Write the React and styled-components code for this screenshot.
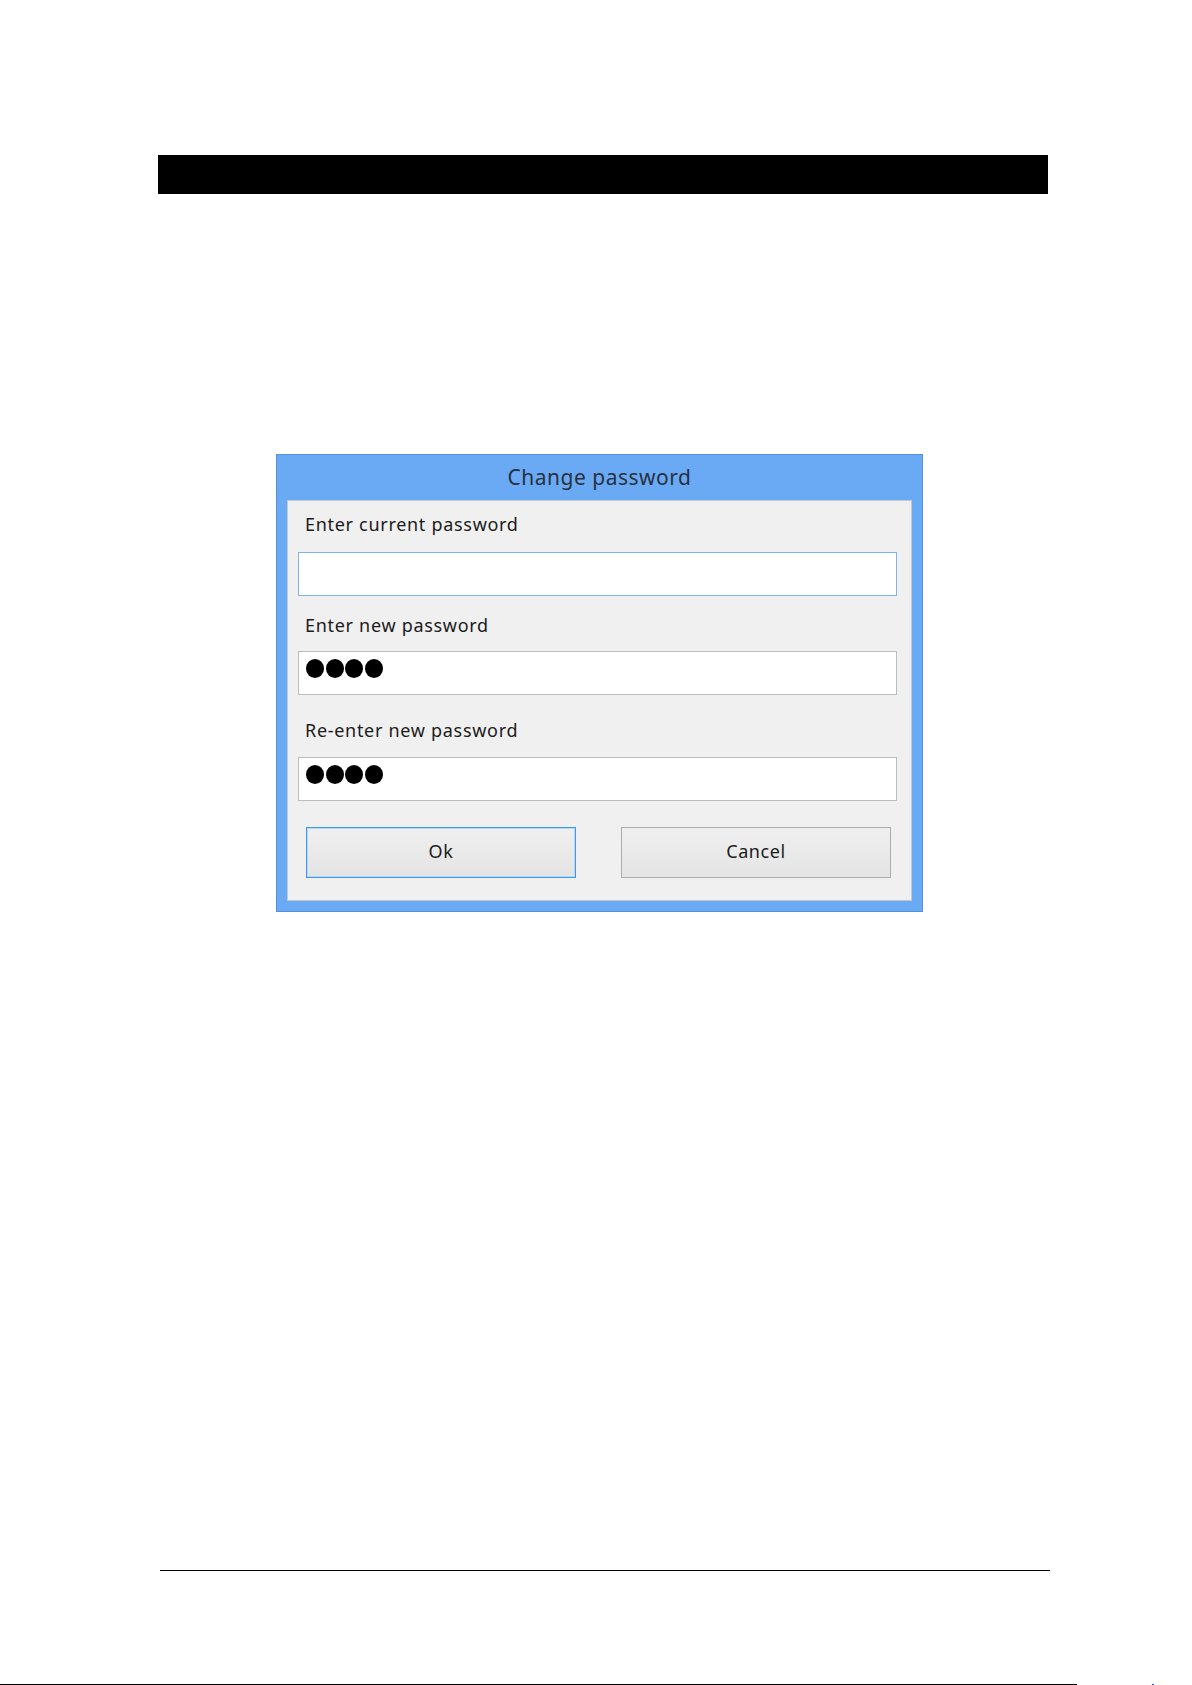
import React from "react";
import styled, { createGlobalStyle } from "styled-components";

const Global = createGlobalStyle`
  html, body { margin: 0; padding: 0; background: #ffffff; }
  body { font-family: "Noto Sans", "Open Sans", sans-serif; }
`;

const Page = styled.div`
  width: 1192px;
  height: 1685px;
  overflow: hidden;
  display: flex;
  flex-direction: column;
  background: #fff;
`;

const HeaderBar = styled.div`
  margin: 155px 0 0 158px;
  width: 890px;
  height: 39px;
  background: #000;
`;

const Dialog = styled.div`
  margin: 260px 0 0 276px;
  width: 647px;
  height: 458px;
  box-sizing: border-box;
  border: 1px solid #5590da;
  background: #6aaaf5;
  display: flex;
  flex-direction: column;
  padding: 0 10px 10px;
`;

const Title = styled.div`
  height: 45px;
  display: flex;
  align-items: center;
  justify-content: center;
  font-size: 21px;
  letter-spacing: 0.5px;
  color: #27313f;
  padding-bottom: 1px;
  box-sizing: border-box;
`;

const Panel = styled.div`
  flex: 1;
  box-sizing: border-box;
  background: #f0f0f0;
  border: 1px solid #c3c9d1;
  display: flex;
  flex-direction: column;
  padding: 11px 14px 0 10px;
`;

const Label = styled.div`
  font-size: 18px;
  letter-spacing: 0.7px;
  line-height: 24px;
  height: 24px;
  color: #1b1b1b;
  padding-left: 7px;
  margin-top: ${(p) => p.$top}px;
`;

const Field = styled.div`
  margin-top: ${(p) => p.$top}px;
  height: 44px;
  box-sizing: border-box;
  background: #fff;
  border: 1px solid ${(p) => (p.$focus ? "#7eb4ea" : "#b9bcc1")};
  display: flex;
  align-items: center;
  gap: 1.5px;
  padding: 0 0 9px 7px;
`;

const Dot = styled.span`
  width: 18px;
  height: 19px;
  border-radius: 50%;
  background: #000;
`;

const ButtonRow = styled.div`
  margin: 26px 6px 0 8px;
  display: flex;
  gap: 45px;
`;

const Button = styled.button`
  flex: 1;
  height: 51px;
  box-sizing: border-box;
  font-family: "Noto Sans", "Open Sans", sans-serif;
  font-size: 18px;
  letter-spacing: 0.6px;
  color: #1b1b1b;
  background: linear-gradient(#efefef, #e4e4e4);
  border: 1px solid ${(p) => (p.$primary ? "#3c9af5" : "#acacac")};
  box-shadow: ${(p) => (p.$primary ? "inset 0 0 0 1px #b6d8f8" : "none")};
  padding: 0 0 3px;
  border-radius: 0;
`;

const FooterRule = styled.div`
  margin: 658px 0 0 160px;
  width: 890px;
  height: 1px;
  background: #000;
`;

const BottomRow = styled.div`
  margin-top: 113px;
  display: flex;
  align-items: flex-start;
`;

const BottomRule = styled.div`
  width: 1077px;
  height: 1px;
  background: #000;
`;

const Mark = styled.span`
  margin-left: 75px;
  width: 2px;
  height: 1px;
  background: #2050e0;
`;

const Password = ({ count }) => (
  <>
    {Array.from({ length: count }).map((_, i) => (
      <Dot key={i} />
    ))}
  </>
);

export default function App() {
  return (
    <>
      <Global />
      <Page>
        <HeaderBar />
        <Dialog>
          <Title>Change password</Title>
          <Panel>
            <Label $top={0}>Enter current password</Label>
            <Field $top={16} $focus />
            <Label $top={17}>Enter new password</Label>
            <Field $top={14}>
              <Password count={4} />
            </Field>
            <Label $top={23}>Re-enter new password</Label>
            <Field $top={15}>
              <Password count={4} />
            </Field>
            <ButtonRow>
              <Button $primary>Ok</Button>
              <Button>Cancel</Button>
            </ButtonRow>
          </Panel>
        </Dialog>
        <FooterRule />
        <BottomRow>
          <BottomRule />
          <Mark />
        </BottomRow>
      </Page>
    </>
  );
}
